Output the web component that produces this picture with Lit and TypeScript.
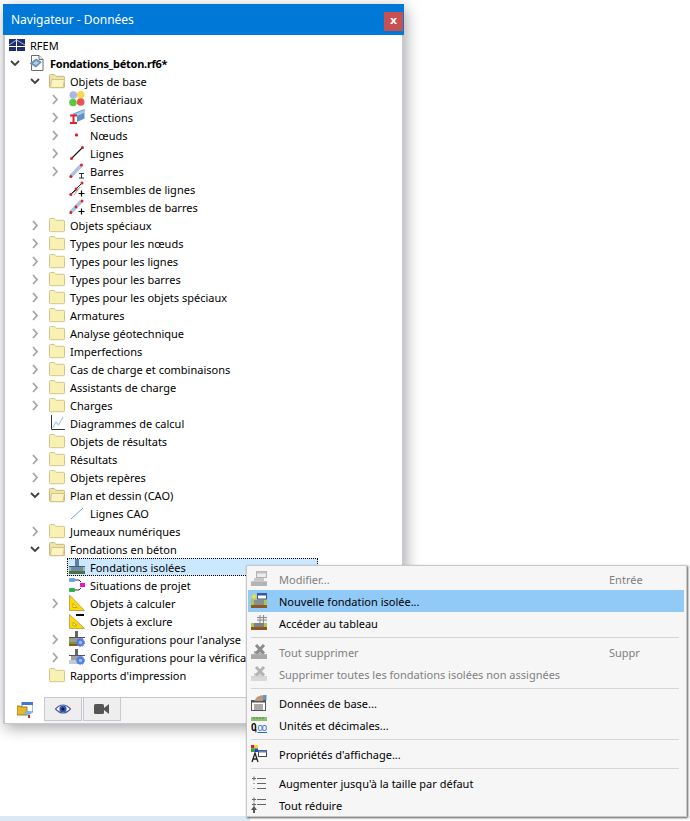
import { LitElement, html, css, svg } from 'lit';
import { customElement } from 'lit/decorators.js';

const icon = (body: unknown, size = 16) =>
  html`<svg class="ico" width=${size} height=${size} viewBox="0 0 16 16">${body}</svg>`;

const folder = icon(svg`
  <path d="M.5 4V2.500q0-1 1-1h3.700l1.600 1.800h7.700q1 0 1 1v9.400q0 1-1 1h-13q-1 0-1-1z" fill="#f9f0b4" stroke="#d2c588"/>`);
const folderOpen = icon(svg`
  <path d="M.5 4V2.500q0-1 1-1h3.700l1.600 1.800h7.700q1 0 1 1v9.400q0 1-1 1h-13q-1 0-1-1z" fill="#efe4a6" stroke="#c4b87c"/>
  <path d="M2.500 6.500h13l-1.500 8H1.500z" fill="#fbf3c0" stroke="#d2c588"/>`);
const rfem = icon(svg`
  <rect x="0" y="2" width="16" height="12" fill="#222c70"/>
  <path d="M0 9.500h16M7.500 2v12" stroke="#fff"/>
  <path d="M0 8L7.500 3L16 8" stroke="#a4b8e0" fill="none"/>`);
const file = icon(svg`
  <path d="M2.500.5h7.500l4 4v11H2.500z" fill="#fff" stroke="#6c6c6c"/>
  <path d="M10 .5v4h4" fill="#e8e8e8" stroke="#6c6c6c"/>
  <path d="M.5 8.500L7 3.500l6 3.500-6 5.500z" fill="#6b96c0"/>
  <path d="M4 8.500l3-2.500 3 1.500-3 2.500z" fill="#bcd0e2"/>`);
const materials = icon(svg`
  <circle cx="4.300" cy="4" r="3.800" fill="#a9b5ea"/>
  <circle cx="11.700" cy="3.800" r="3.800" fill="#f5da4e"/>
  <circle cx="4" cy="11.500" r="3.800" fill="#5cc83a"/>
  <circle cx="11.700" cy="11" r="3.800" fill="#ee5050"/>`);
const sections = icon(svg`
  <path d="M3 5L15.500 0v9.500L8 13V7z" fill="#5f94c8"/>
  <path d="M5 5l10.500-4v2.500L8 7z" fill="#a9cbe8"/>
  <path d="M1 6.500h7M1 14h7M4.500 6.500V14" stroke="#e02030" stroke-width="2" fill="none"/>`);
const node = icon(svg`<rect x="6" y="6.500" width="3" height="3" rx="1" fill="#d02030"/>`);
const line = icon(svg`
  <path d="M2.500 13.500L13.500 2.500" stroke="#111" stroke-width="1.100"/>
  <circle cx="2.500" cy="13.500" r="1.500" fill="#d82030"/><circle cx="13.500" cy="2.500" r="1.500" fill="#d82030"/>`);
const bar = icon(svg`
  <path d="M2 13L12 2.500" stroke="#a9c3e2" stroke-width="3.500"/>
  <circle cx="1.800" cy="13.500" r="1.500" fill="#d82030"/><circle cx="12.500" cy="2" r="1.500" fill="#d82030"/>
  <path d="M10 10.500h5M12.500 10.500v4.500M10 15h5" stroke="#333" fill="none"/>`);
const plus = svg`<path d="M9.500 12.500h6M12.500 9.500v6" stroke="#000" stroke-width="1.200"/>`;
const lineSet = icon(svg`
  <path d="M1.500 13.500L13 2M1.500 13.500L8.500 8" stroke="#222" fill="none"/>
  <path d="M5 14L11 6" stroke="#9a9a9a"/>
  <circle cx="1.800" cy="13.600" r="1.500" fill="#d82030"/><circle cx="13" cy="2" r="1.500" fill="#d82030"/>
  <circle cx="7" cy="8" r="1.400" fill="#d82030"/>${plus}`);
const barSet = icon(svg`
  <path d="M2 13L12 2.500" stroke="#a9c3e2" stroke-width="3.500"/>
  <circle cx="1.800" cy="13.600" r="1.500" fill="#d82030"/><circle cx="13" cy="2" r="1.500" fill="#d82030"/>
  <circle cx="7" cy="8" r="1.400" fill="#d82030"/>${plus}`);
const diagram = icon(svg`
  <path d="M2.500 0v14.500H16" stroke="#333" fill="none"/>
  <path d="M3.500 13L7 7l2.500 3L14 2" stroke="#a9cdf0" stroke-width="1.200" fill="none"/>`);
const cadLine = icon(svg`<path d="M2 14L14 3" stroke="#6fa0d8"/>`);
const foundation = icon(svg`
  <rect x="6" y="0" width="4" height="8" fill="#5f7f9f"/>
  <rect x="2" y="8" width="12" height="4" fill="#6c8ca8"/>
  <rect x="0" y="8" width="2" height="4" fill="#a0b8a0"/>
  <rect x="14" y="8" width="2" height="4" fill="#a0b8a0"/>
  <rect x="0" y="12" width="16" height="3" fill="#4f6f45"/>
  <rect x="0" y="7" width="16" height="1" fill="#3f5f78"/>`);
const situations = icon(svg`
  <rect x="0" y="1" width="6" height="4" rx="1" fill="#6f9fe0"/>
  <rect x="0" y="11" width="6" height="4" rx="1" fill="#2fb050"/>
  <rect x="11" y="6" width="5" height="4" fill="#f010d0"/>
  <path d="M6 3h4l2 2M6 13h4l2-2" stroke="#333" fill="none"/>`);
const square = svg`
  <path d="M.5 0L15.500 15.500H.5z" fill="#ffd800" stroke="#b8a860"/>
  <path d="M4 8.500l4 4H4z" fill="#fff" stroke="#c8a800"/>`;
const calc = icon(square);
const exclude = icon(svg`
  <g transform="translate(0 1.500) scale(1 .9)">${square}</g>
  <rect x="7" y="1" width="8" height="2" fill="#000"/>`);
const gear = svg`
  <circle cx="11.500" cy="11.500" r="2.800" fill="#9fbcf0" stroke="#4f7fe0" stroke-width="2"/>
  <circle cx="11.500" cy="11.500" r="4.200" fill="none" stroke="#4f7fe0" stroke-dasharray="1.500 1.500"/>`;
const configA = icon(svg`
  <rect x="6" y="0" width="3" height="7" fill="#666"/>
  <rect x="0" y="6" width="16" height="1" fill="#555"/>
  <rect x="0" y="7" width="2" height="4" fill="#8cb040"/>
  <rect x="2" y="7" width="12" height="4" fill="#9a9aa2"/>
  <rect x="0" y="11" width="10" height="2" fill="#7a9a30"/>
  <rect x="0" y="13" width="10" height="2" fill="#8a5a20"/>${gear}`);
const configB = icon(svg`
  <rect x="6" y="0" width="3" height="7" fill="#666"/>
  <rect x="0" y="6" width="16" height="1" fill="#555"/>
  <rect x="2" y="7" width="11" height="4" fill="#a0a0a8"/>
  <rect x="0" y="11" width="10" height="4" fill="#c8c8d0"/>${gear}`);

const chevOpen = html`<svg width="16" height="18" viewBox="0 0 16 18"><path d="M4 7l4 4 4-4" fill="none" stroke="#404040" stroke-width="1.800"/></svg>`;
const chevClosed = html`<svg width="16" height="18" viewBox="0 0 16 18"><path d="M6 5l4 4.500L6 14" fill="none" stroke="#a6a6a6" stroke-width="1.800"/></svg>`;

// menu icons
const base = (c: string, d: string) => svg`
  <rect x="0" y="11" width="16" height="4" fill=${d}/>
  <rect x="3" y="7" width="10" height="4" fill=${c}/>
  <rect x="0" y="10" width="16" height="1" fill=${c}/>`;
const mEdit = icon(svg`${base('#c8c8c8', '#b4b4b4')}
  <rect x="5.500" y=".5" width="10" height="6" fill="#ececec" stroke="#b0b0b0"/>
  <rect x="5.500" y=".5" width="10" height="2" fill="#c0c0c0"/>`);
const mNew = icon(svg`
  <rect x="0" y="6" width="16" height="6" fill="#a8c850"/>
  <rect x="3" y="7" width="10" height="5" fill="#8c8c94"/>
  <rect x="0" y="12" width="16" height="3" fill="#8a5a20"/>
  <rect x="6.500" y=".5" width="9" height="5.500" fill="#fff" stroke="#3858a0"/>
  <rect x="6.500" y=".5" width="9" height="2" fill="#3858a0"/>
  <path d="M3 0l1 2.500 2.500 1-2.500 1-1 2.500-1-2.500-2.500-1 2.500-1z" fill="#ffe020"/>`);
const mTable = icon(svg`
  <rect x="0" y="8" width="16" height="4" fill="#a8c850"/>
  <rect x="3" y="8" width="10" height="4" fill="#808088"/>
  <rect x="0" y="12" width="16" height="3" fill="#8a5a20"/>
  <rect x="6" y="0" width="10" height="8" fill="#efefef"/>
  <path d="M6 2.500h10M6 5h10M9 0v8M12.500 0v8" stroke="#8a8a8a"/>`);
const mDelAll = icon(svg`${base('#b4b4b4', '#a8a8a8')}
  <path d="M5 1l8 8.500M13 1L5 9.500" stroke="#8c8c8c" stroke-width="3"/>`);
const mDel = icon(svg`${base('#d4d4d4', '#d8d8d8')}
  <path d="M5 1l8 8.500M13 1L5 9.500" stroke="#b4b4b4" stroke-width="3"/>`);
const mData = icon(svg`
  <rect x=".5" y="5.500" width="14" height="10" fill="#fff" stroke="#555"/>
  <rect x=".5" y="5.500" width="14" height="2" fill="#555"/>
  <path d="M3 10h9M3 12h9M3 14h9" stroke="#555"/>
  <path d="M3 6l3-4 5-2 2 2-1 4z" fill="#c09878"/>
  <rect x="12" y="0" width="3.500" height="5" fill="#5f94c8"/>`);
const mUnits = html`<svg class="ico" width="16" height="16" viewBox="0 0 16 16">
  <rect x="0" y="0" width="16" height="4" fill="#8cc070"/>
  <path d="M3 0v2M6 0v2M9 0v2M12 0v2" stroke="#4a8a40"/>
  <text x="0" y="14" font-family="Liberation Sans" font-size="10" font-weight="700" fill="#000" textLength="6">0,</text>
  <text x="6.500" y="14" font-family="Liberation Sans" font-size="9.500" fill="#2a6ad8" textLength="9.500">00</text>
  <path d="M6.500 15.500h9.500" stroke="#2a6ad8"/></svg>`;
const mProps = html`<svg class="ico" width="16" height="18" viewBox="0 0 16 18">
  <rect x="0" y="0" width="3.500" height="3.500" fill="#e02020"/>
  <rect x="3.500" y="0" width="3.500" height="3.500" fill="#f0e020"/>
  <rect x="0" y="3.500" width="3.500" height="3.500" fill="#20b020"/>
  <rect x="3.500" y="3.500" width="3.500" height="3.500" fill="#2040d0"/>
  <rect x="7.500" y="5.500" width="8" height="6" fill="#fff" stroke="#445"/>
  <rect x="7.500" y="5.500" width="8" height="2" fill="#5f84b8"/>
  <path d="M1 17L4 8l3 9M2 14h4" fill="none" stroke="#222" stroke-width="1.300"/></svg>`;
const mExpand = icon(svg`
  <path d="M6 3.500h9M6 8.500h9M6 13.500h9M1 3.500h4M3 1.500v4M3 8v1M3 13v1" stroke="#666" fill="none"/>`);
const mCollapse = icon(svg`
  <path d="M6 2.500h9M6 7.500h9M1 2.500h4M3 .5v4M1 7.500h4M3 5.500v4" stroke="#666" fill="none"/>
  <path d="M3 9l3 4H4v3H2v-3H0z" fill="#555"/>`);

type Row = { t: string; l: number; c?: boolean; o?: boolean; i: unknown; b?: boolean; sel?: boolean };
const f = (t: string, l = 1): Row => ({ t, l, c: true, i: folder });

const rows: Row[] = [
  { t: 'Fondations_béton.rf6*', l: 0, c: true, o: true, i: file, b: true },
  { t: 'Objets de base', l: 1, c: true, o: true, i: folderOpen },
  { t: 'Matériaux', l: 2, c: true, i: materials },
  { t: 'Sections', l: 2, c: true, i: sections },
  { t: 'Nœuds', l: 2, c: true, i: node },
  { t: 'Lignes', l: 2, c: true, i: line },
  { t: 'Barres', l: 2, c: true, i: bar },
  { t: 'Ensembles de lignes', l: 2, i: lineSet },
  { t: 'Ensembles de barres', l: 2, i: barSet },
  f('Objets spéciaux'),
  f('Types pour les nœuds'),
  f('Types pour les lignes'),
  f('Types pour les barres'),
  f('Types pour les objets spéciaux'),
  f('Armatures'),
  f('Analyse géotechnique'),
  f('Imperfections'),
  f('Cas de charge et combinaisons'),
  f('Assistants de charge'),
  f('Charges'),
  { t: 'Diagrammes de calcul', l: 1, i: diagram },
  { t: 'Objets de résultats', l: 1, i: folder },
  f('Résultats'),
  f('Objets repères'),
  { t: 'Plan et dessin (CAO)', l: 1, c: true, o: true, i: folderOpen },
  { t: 'Lignes CAO', l: 2, i: cadLine },
  f('Jumeaux numériques'),
  { t: 'Fondations en béton', l: 1, c: true, o: true, i: folderOpen },
  { t: 'Fondations isolées', l: 2, i: foundation, sel: true },
  { t: 'Situations de projet', l: 2, i: situations },
  { t: 'Objets à calculer', l: 2, c: true, i: calc },
  { t: 'Objets à exclure', l: 2, i: exclude },
  { t: "Configurations pour l'analyse", l: 2, c: true, i: configA },
  { t: 'Configurations pour la vérification', l: 2, c: true, i: configB },
  { t: "Rapports d'impression", l: 1, i: folder },
];

type Item = { t?: string; i?: unknown; k?: string; off?: boolean; hot?: boolean };
const menu: Item[] = [
  { t: 'Modifier...', i: mEdit, k: 'Entrée', off: true },
  { t: 'Nouvelle fondation isolée...', i: mNew, hot: true },
  { t: 'Accéder au tableau', i: mTable },
  {},
  { t: 'Tout supprimer', i: mDelAll, k: 'Suppr', off: true },
  { t: 'Supprimer toutes les fondations isolées non assignées', i: mDel, off: true },
  {},
  { t: 'Données de base...', i: mData },
  { t: 'Unités et décimales...', i: mUnits },
  {},
  { t: "Propriétés d'affichage...", i: mProps },
  {},
  { t: "Augmenter jusqu'à la taille par défaut", i: mExpand },
  { t: 'Tout réduire', i: mCollapse },
];

@customElement('app-root')
export default class App extends LitElement {
  static override styles = css`
    :host {
      display: block;
      position: relative;
      width: 690px;
      height: 821px;
      overflow: hidden;
      background: #fff linear-gradient(#dce8f3, #dce8f3) 0 100% / 250px 5px no-repeat;
      font: 11px/18px "Noto Sans", sans-serif;
      color: #000;
    }
    svg { display: block; flex: none; }

    .panel {
      width: 401px;
      margin: 4px 0 0 3px;
      border: solid #c8c8d2;
      border-width: 0 2px 1px 2px;
      box-sizing: border-box;
      background: #fff;
      box-shadow: 2px 4px 14px rgba(0, 0, 0, .35);
    }
    .title {
      display: flex;
      justify-content: space-between;
      margin: 0 -2px;
      height: 31px;
      padding: 8px 1px 0 8px;
      box-sizing: border-box;
      background: #0078d7;
      color: #fff;
      font-size: 12px;
      line-height: 16px;
    }
    .close {
      width: 19px;
      height: 19px;
      background: #c75050;
      font: bold 11px/17px "DejaVu Sans", sans-serif;
      text-align: center;
    }
    .tree {
      height: 662px;
      padding-top: 1px;
      box-sizing: border-box;
      overflow: hidden;
    }
    .row {
      display: flex;
      height: 18px;
      white-space: nowrap;
    }
    .root { padding-left: 4px; }
    .root .cell { margin-left: 0; }
    .l0 { padding-left: 2px; }
    .l1 { padding-left: 22px; }
    .l2 { padding-left: 42px; }
    .chev { width: 16px; flex: none; }
    .cell {
      display: flex;
      align-items: center;
      margin-left: 6px;
      height: 18px;
    }
    .cell span { margin-top: 2px; }
    .cell .ico { margin-right: 5px; }
    .cell.sel {
      width: 251px;
      margin-left: 4px;
      padding-left: 1px;
      box-sizing: border-box;
      background: #cce8ff;
      border: 1px dotted #000;
    }
    .bold { font-weight: 700; letter-spacing: -.25px; }

    .tabs {
      display: flex;
      height: 26px;
      background: #f5f5f5;
    }
    .tab-on {
      width: 39px;
      display: flex;
      justify-content: center;
      padding-top: 5px;
      box-sizing: border-box;
      background: #fff;
    }
    .tab-rest {
      flex: 1;
      display: flex;
      align-items: flex-start;
      border-top: 1px solid #c8c8d2;
    }
    .tab {
      height: 23px;
      width: 38px;
      display: flex;
      align-items: center;
      justify-content: center;
      box-sizing: border-box;
      background: #eee;
      border: solid #c8c8d2;
      border-width: 0 1px 1px 1px;
      margin-right: 1px;
    }

    .menu {
      position: absolute;
      left: 246px;
      top: 565px;
      width: 441px;
      height: 252px;
      padding: 2px 2px 0 1px;
      box-sizing: border-box;
      background: #f6f6f6;
      border: 1px solid #c8c8c8;
      box-shadow: 1px 1px 2px rgba(0, 0, 0, .65);
    }
    .item {
      display: grid;
      grid-template-columns: 31px 330px 1fr;
      align-items: center;
      height: 22px;
      white-space: nowrap;
    }
    .item span { margin-top: 2px; }
    .item .ico { margin-left: 3px; }
    .item.off { color: #808080; }
    .item.hot { background: #91c9f7; }
    .sep {
      height: 7px;
      padding-top: 3px;
      box-sizing: border-box;
    }
    .sep::before {
      content: "";
      display: block;
      height: 1px;
      margin: 0 5px 0 3px;
      background: #d4d4d4;
    }
  `;

  override render() {
    return html`
      <div class="panel">
        <div class="title"><span>Navigateur - Données</span><div class="close">x</div></div>
        <div class="tree">
          <div class="row root"><div class="cell">${rfem}<span>RFEM</span></div></div>
          ${rows.map(
            (r) => html`
              <div class="row l${r.l}">
                <div class="chev">${r.c ? (r.o ? chevOpen : chevClosed) : ''}</div>
                <div class="cell ${r.sel ? 'sel' : ''}">${r.i}<span class=${r.b ? 'bold' : ''}>${r.t}</span></div>
              </div>
            `,
          )}
        </div>
        <div class="tabs">
          <div class="tab-on">
            <svg width="16" height="16" viewBox="0 0 16 16">
              <rect x="5" y="0" width="11" height="10" fill="#fff" stroke="#4a78c0"/>
              <rect x="5" y="0" width="11" height="3" fill="#3f78d0"/>
              <path d="M0 4h3l1 1h6v8H0z" fill="#e8b828" stroke="#8a6a10" stroke-width=".8"/>
              <path d="M6 10l6-1 3 2-4 3z" fill="#6fb8e8"/>
              <path d="M11 13h2v3h-2z" fill="#e02020"/>
            </svg>
          </div>
          <div class="tab-rest">
            <div class="tab">
              <svg width="16" height="12" viewBox="0 0 16 12">
                <path d="M.5 6Q8-2 15.500 6Q8 14 .5 6z" fill="#fff" stroke="#5a5a9a" stroke-width="1.200"/>
                <circle cx="8" cy="6" r="3.600" fill="#2a5ab0"/>
                <circle cx="8" cy="6" r="1.500" fill="#101040"/>
              </svg>
            </div>
            <div class="tab">
              <svg width="16" height="10" viewBox="0 0 16 10">
                <rect x="0" y="0" width="10" height="10" rx="1.500" fill="#555"/>
                <path d="M10 4l5-4v10l-5-4z" fill="#555"/>
              </svg>
            </div>
          </div>
        </div>
      </div>
      <div class="menu">
        ${menu.map((m) =>
          m.t
            ? html`<div class="item ${m.off ? 'off' : ''} ${m.hot ? 'hot' : ''}">
                ${m.i}<span>${m.t}</span><span>${m.k ?? ''}</span>
              </div>`
            : html`<div class="sep"></div>`,
        )}
      </div>
    `;
  }
}
